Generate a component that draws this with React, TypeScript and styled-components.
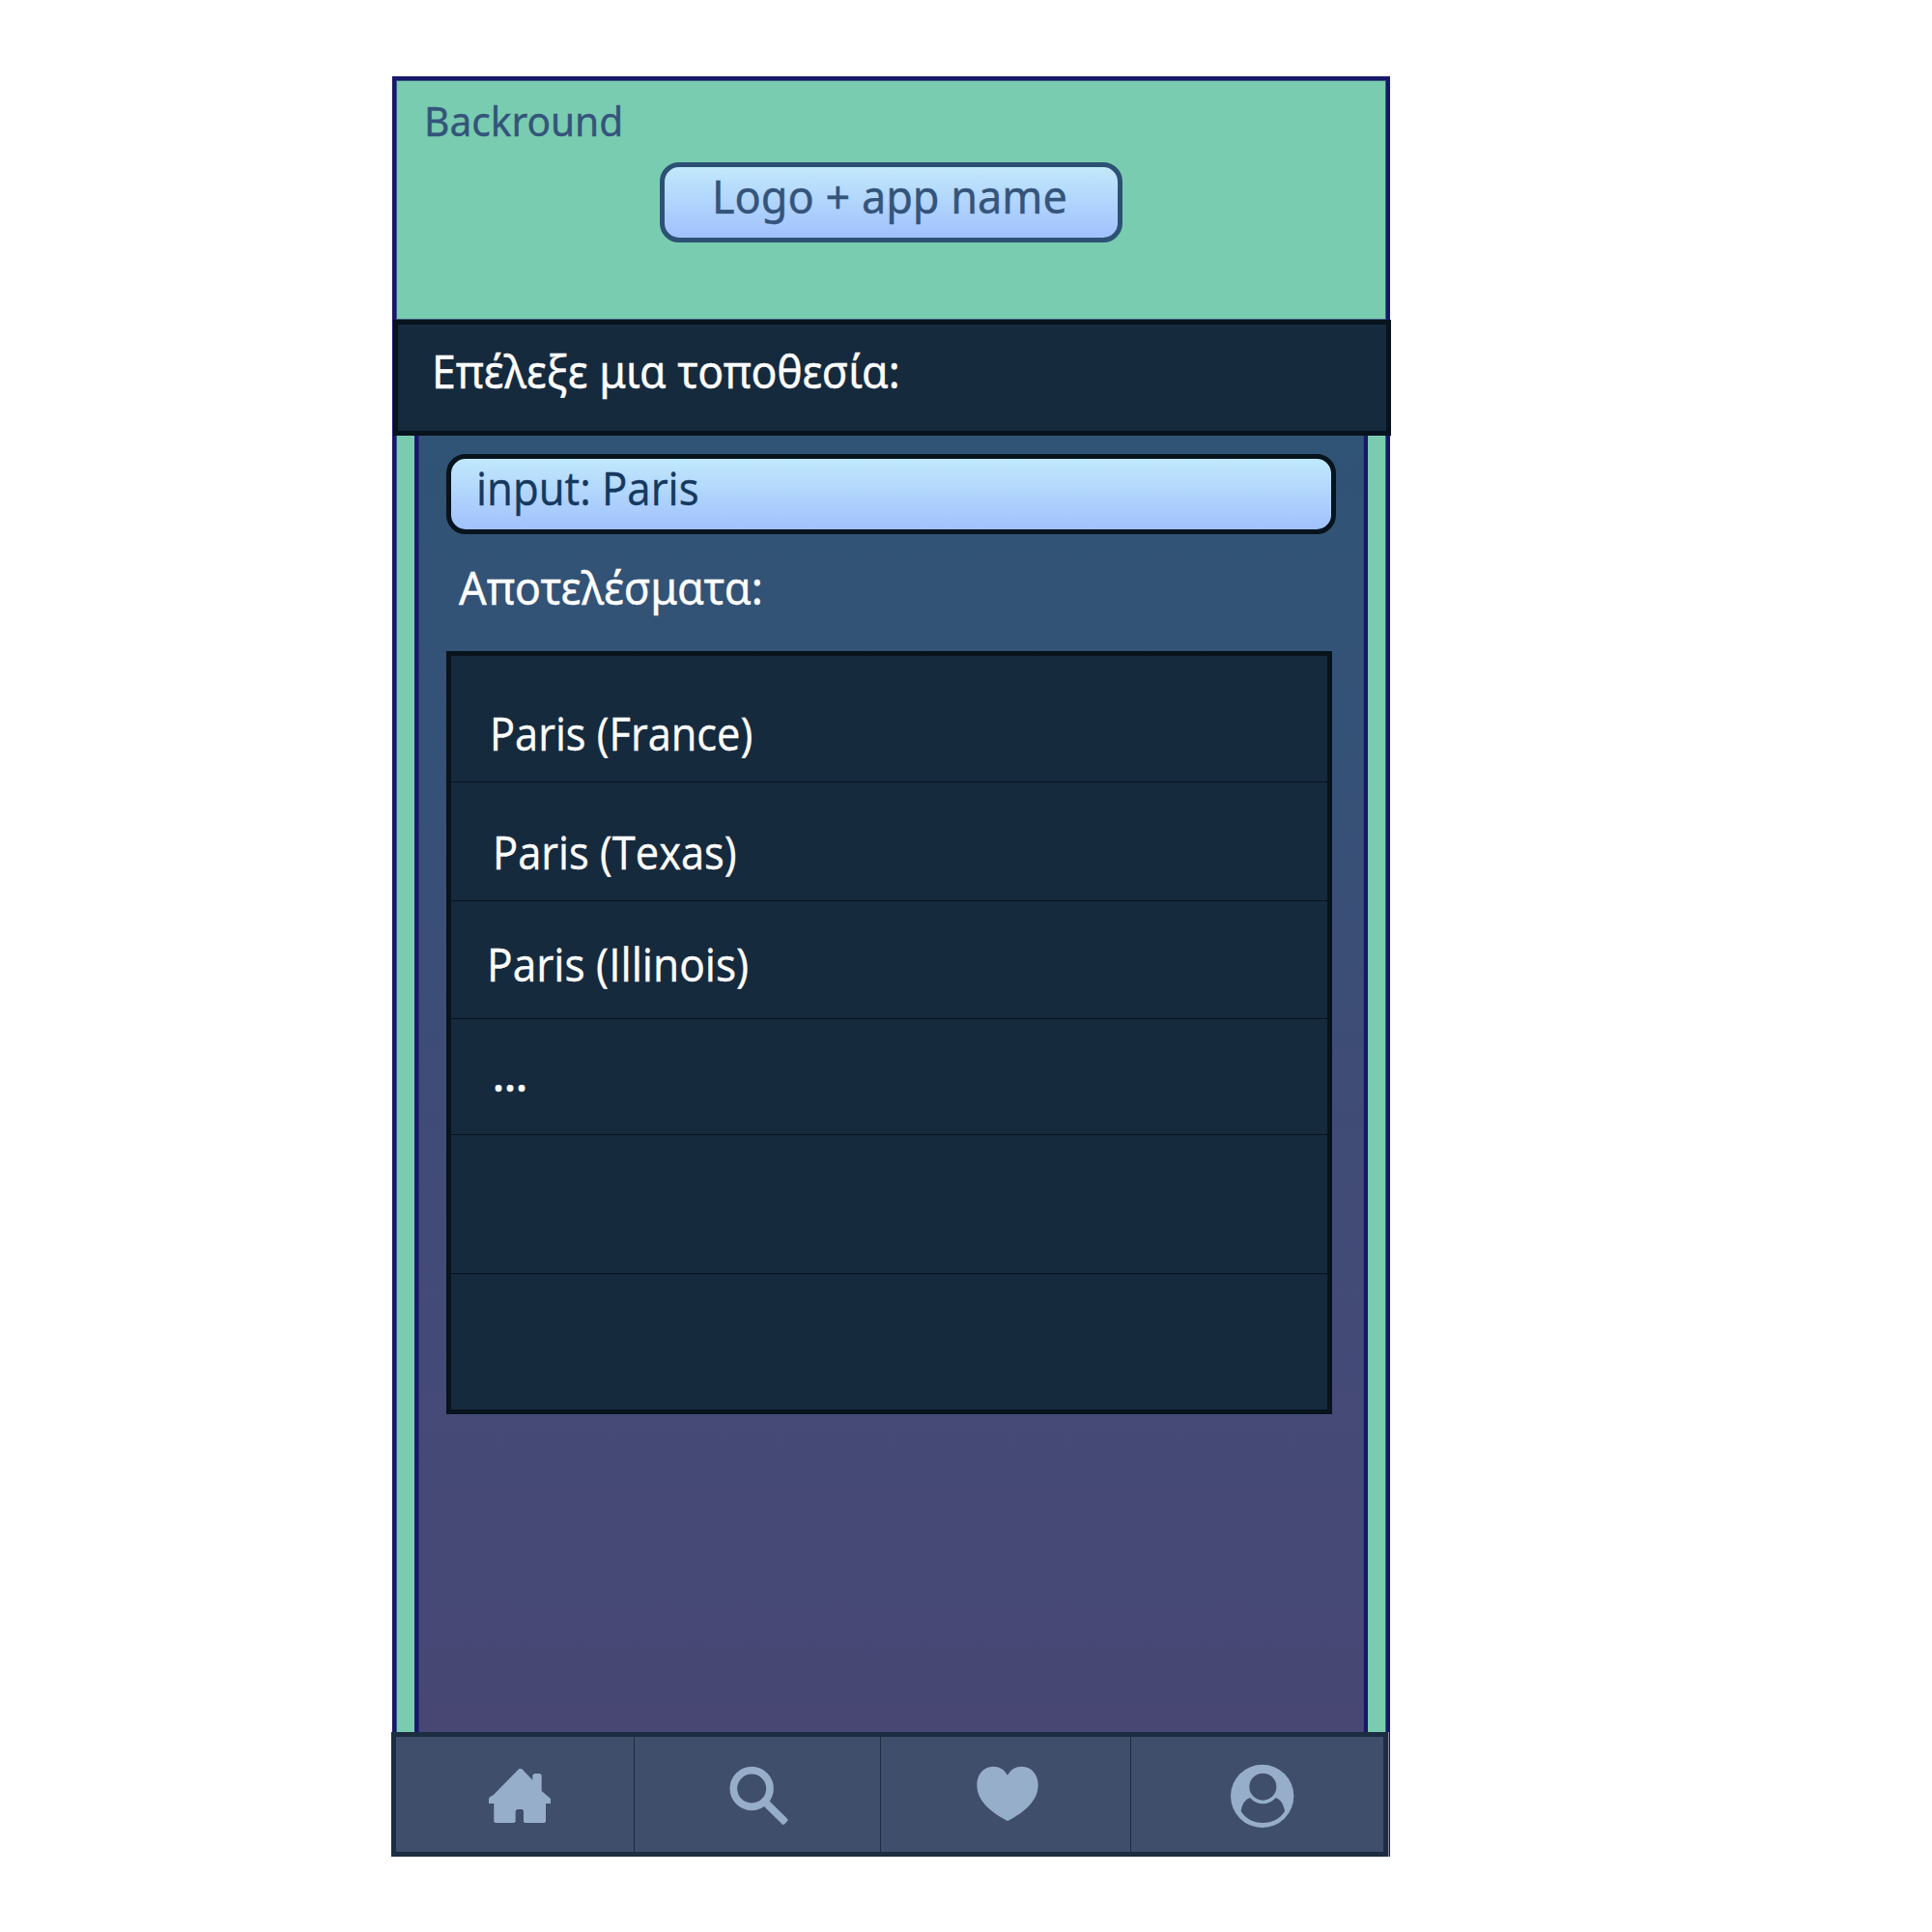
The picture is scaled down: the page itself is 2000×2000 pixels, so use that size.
import React from 'react';
import styled, { createGlobalStyle } from 'styled-components';

const GlobalStyle = createGlobalStyle`
  *, *::before, *::after { box-sizing: border-box; }
  body { margin: 0; background: #ffffff; font-family: 'Noto Sans', 'Open Sans', sans-serif; }
`;

const Page = styled.main`
  width: 2000px;
  height: 2000px;
  padding: 79px 0 0 405px;
  background: #ffffff;
`;

const Screen = styled.div`
  width: 1035px;
  height: 1843px;
  display: grid;
  grid-template-rows: 252px 120px 1342px 129px;
`;

const Header = styled.header`
  margin: 0 1px;
  border: 4px solid #18186a;
  border-bottom: 0;
  background: #7accb0;
  box-shadow: inset 0 0 0 1px #3a5a80;
  display: flex;
  flex-direction: column;
  align-items: flex-start;
`;

const Label = styled.span<{ $size?: number; $scale?: number; $color?: string; $weight?: number }>`
  display: inline-block;
  white-space: pre;
  height: 60px;
  line-height: 60px;
  font-size: ${(p) => p.$size ?? 47.6}px;
  font-weight: ${(p) => p.$weight ?? 400};
  color: ${(p) => p.$color ?? '#ffffff'};
  -webkit-text-stroke: 0.4px ${(p) => p.$color ?? '#ffffff'};
  transform: scaleX(${(p) => p.$scale ?? 1});
  transform-origin: 0 50%;
`;

const Caption = styled.div`
  height: 85px;
  padding: 12px 0 0 29px;
`;

const Logo = styled.div`
  width: 479px;
  height: 83px;
  margin-left: 273px;
  padding: 0 0 0 49px;
  border: 5px solid #2d5175;
  border-radius: 20px;
  background: linear-gradient(#c2e8fb, #a0c1fe);
`;

const TitleBar = styled.section`
  margin-left: 2px;
  border: 5px solid #07131d;
  background: #162a3e;
  box-shadow: -1px 0 #18186a;
  padding: 18px 0 0 35px;
`;

const Body = styled.section`
  margin: 0 1px;
  padding: 0 18px;
  background: #7accb0;
  border: solid #18186a;
  border-width: 0 4px;
  box-shadow: inset 1px 0 #3a5a80, inset -1px 0 #3a5a80;
  display: flex;
`;

const Panel = styled.div`
  flex: 1;
  margin: 0 1px;
  border: solid #18186a;
  border-width: 0 4px;
  box-shadow: inset 1px 0 #2c2c6e, inset -1px 0 #33457a;
  background: linear-gradient(#305475 0%, #345277 22%, #3f4c76 50%, #454a77 75%, #484774 100%);
  padding: 19px 0 0 29px;
`;

const SearchInput = styled.div`
  width: 921px;
  height: 83px;
  padding: 0 0 0 26px;
  border: 5px solid #07131d;
  border-radius: 20px;
  background: linear-gradient(#c0e8fc, #a1c1fd);
  font-family: 'Open Sans', 'Noto Sans', sans-serif;
`;

const ResultsHeading = styled.div`
  height: 121px;
  padding: 25px 0 0 13px;
`;

const Results = styled.ul`
  list-style: none;
  margin: 0;
  padding: 0;
  width: 917px;
  height: 790px;
  border: 5px solid #07131d;
  background: #162a3e;
  font-family: 'Open Sans', 'Noto Sans', sans-serif;
`;

const Result = styled.li<{ $height: number; $left: number; $top: number }>`
  height: ${(p) => p.$height}px;
  padding: ${(p) => p.$top}px 0 0 ${(p) => p.$left}px;
  &:not(:last-child) { border-bottom: 1px solid #07131d; }
`;

const NavBar = styled.nav`
  width: 1032px;
  border: 5px solid #1c2d41;
  background: #3f4e6b;
  display: grid;
  grid-template-columns: 247px 255px 259px 1fr;
  box-shadow: 1px 0 #8c8cae, 2px 0 #18186a;
`;

const NavItem = styled.a<{ $left: number }>`
  padding: 12px 0 0 ${(p) => p.$left}px;
  &:not(:last-child) { border-right: 1px solid #1c2d41; }
`;

const Icon = styled.svg`
  display: block;
  width: 100px;
  height: 90px;
  fill: #97aeca;
`;

const places = [
  { name: 'Paris (France)', height: 131, left: 40, top: 50, scale: 0.911 },
  { name: 'Paris (Texas)', height: 123, left: 43, top: 42, scale: 0.913 },
  { name: 'Paris (Illinois)', height: 122, left: 37, top: 35, scale: 0.93 },
  { name: '...', height: 120, left: 43, top: 27, scale: 0.92, weight: 600 },
  { name: '', height: 144, left: 0, top: 0, scale: 1 },
  { name: '', height: 140, left: 0, top: 0, scale: 1 },
];

const HomeIcon = () => (
  <Icon viewBox="0 0 300 270">
    <path d="M142 63h8l34 35v-15l5-5h18l5 5v49l28 24v15h-15v56l-4 4h-61l-4-4v-33l-4-5h-16l-5 5v33l-4 4H68l-4-4v-56H48v-15l4-6 10-5Z" />
  </Icon>
);

const SearchIcon = () => (
  <Icon viewBox="0 0 300 270">
    <circle cx="114.500" cy="124.500" r="56.500" fill="none" stroke="#97aeca" strokeWidth="23" />
    <path d="M153 180l54 53q4 5 8 3l10-10q3-4 0-8l-56-55Z" />
  </Icon>
);

const HeartIcon = () => (
  <Icon viewBox="0 0 300 270">
    <path d="M129 83C119 65 104 56 84 56C54 56 34 82 34 113C34 163 78 199 129 225C180 199 224 163 224 113C224 82 204 56 174 56C154 56 139 65 129 83Z" />
  </Icon>
);

const ProfileIcon = () => (
  <Icon viewBox="0 0 300 270">
    <circle cx="140" cy="148" r="98" />
    <circle cx="142" cy="119" r="42" fill="#3f4e6b" />
    <path fill="#3f4e6b" d="M103 154C87 157 77 174 74 195C89 219 113 231 142 231C171 231 195 219 210 195C206 174 197 157 181 154C160 178 124 178 103 154Z" />
  </Icon>
);

export default function App() {
  return (
    <>
      <GlobalStyle />
      <Page>
        <Screen>
          <Header>
            <Caption>
              <Label $size={42.7} $scale={0.952} $color="#34547b">Backround</Label>
            </Caption>
            <Logo>
              <Label $scale={0.946} $color="#34547b">Logo + app name</Label>
            </Logo>
          </Header>
          <TitleBar>
            <Label $scale={0.936}>Επέλεξε μια τοποθεσία:</Label>
          </TitleBar>
          <Body>
            <Panel>
              <SearchInput>
                <Label $scale={0.92} $color="#15385e">input: Paris</Label>
              </SearchInput>
              <ResultsHeading>
                <Label $scale={0.945}>Αποτελέσματα:</Label>
              </ResultsHeading>
              <Results>
                {places.map((p, i) => (
                  <Result key={i} $height={p.height} $left={p.left} $top={p.top}>
                    {p.name && <Label $scale={p.scale} $weight={p.weight}>{p.name}</Label>}
                  </Result>
                ))}
              </Results>
            </Panel>
          </Body>
          <NavBar>
            <NavItem $left={80}><HomeIcon /></NavItem>
            <NavItem $left={83}><SearchIcon /></NavItem>
            <NavItem $left={88}><HeartIcon /></NavItem>
            <NavItem $left={89}><ProfileIcon /></NavItem>
          </NavBar>
        </Screen>
      </Page>
    </>
  );
}
